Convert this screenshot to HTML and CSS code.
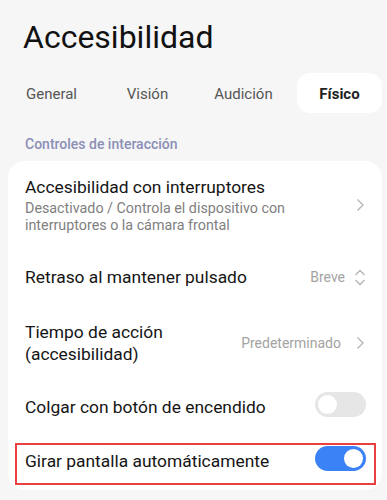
FILE: index.html
```html
<!DOCTYPE html>
<html>
  <head>
    <meta charset="utf-8" />
    <meta name="viewport" content="width=device-width, initial-scale=1" />
    <link rel="stylesheet" href="styles.css">
  </head>
  <body>
    <div class="page">
      <div class="page-title">Accesibilidad</div>

      <div class="tabs">
        <div class="tab">General</div>
        <div class="tab">Visión</div>
        <div class="tab">Audición</div>
        <div class="tab active">Físico</div>
      </div>

      <div class="section-title">Controles de interacción</div>

      <div class="card">
        <div class="row row-sub">
          <div class="row-text">
            <div class="row-title">Accesibilidad con interruptores</div>
            <div class="row-desc">Desactivado / Controla el dispositivo con interruptores o la cámara frontal</div>
          </div>
          <svg class="chevron" width="9" height="14" viewBox="0 0 9 14">
            <path d="M1.5 1.5 L7 7 L1.5 12.5" fill="none" stroke="#b4b4b4" stroke-width="1.3" />
          </svg>
        </div>

        <div class="row">
          <div class="row-text">
            <div class="row-title">Retraso al mantener pulsado</div>
          </div>
          <span class="row-value">Breve</span>
          <svg class="updown" width="12" height="17" viewBox="0 0 12 17">
            <path d="M1.5 6 L6 1.5 L10.5 6" fill="none" stroke="#b4b4b4" stroke-width="1.3" />
            <path d="M1.5 11 L6 15.5 L10.5 11" fill="none" stroke="#b4b4b4" stroke-width="1.3" />
          </svg>
        </div>

        <div class="row row-wrap">
          <div class="row-text">
            <div class="row-title">Tiempo de acción<br>(accesibilidad)</div>
          </div>
          <span class="row-value wide">Predeterminado</span>
          <svg class="chevron" width="9" height="14" viewBox="0 0 9 14">
            <path d="M1.5 1.5 L7 7 L1.5 12.5" fill="none" stroke="#b4b4b4" stroke-width="1.3" />
          </svg>
        </div>

        <div class="row row-short">
          <div class="row-text">
            <div class="row-title">Colgar con botón de encendido</div>
          </div>
          <div class="switch"><div class="knob"></div></div>
        </div>

        <div class="row marked">
          <div class="row-text">
            <div class="row-title">Girar pantalla automáticamente</div>
          </div>
          <div class="switch on"><div class="knob"></div></div>
        </div>
      </div>
    </div>
  </body>
</html>
```

FILE: styles.css
```css
html,
body,
div {
  margin: 0;
  padding: 0;
  box-sizing: border-box;
}

body {
  background-color: #f6f6f6;
  font-family: Roboto, "Noto Sans", sans-serif;
  color: #111;
}

.page {
  width: 387px;
  height: 500px;
  overflow: hidden;
}

.page-title {
  margin: 17px 0 16px 23px;
  font-size: 32px;
  line-height: 40px;
  color: #111;
}

.tabs {
  display: grid;
  grid-template-columns: repeat(4, 96px);
  padding: 0 0 0 3px;
}
.tabs .tab {
  display: flex;
  align-items: center;
  justify-content: center;
  height: 40px;
  padding-top: 2px;
  margin: 0 5px 0 6px;
  border-radius: 13px;
  font-size: 15px;
  color: #555;
}
.tabs .tab.active {
  background-color: #fff;
  color: #222;
  font-weight: bold;
}

.section-title {
  margin: 21px 0 7px 25px;
  font-size: 14px;
  line-height: 20px;
  font-weight: 500;
  color: #8b8fb6;
}

.card {
  margin: 0 5px 0 8px;
  height: 329px;
  background-color: #fff;
  border-radius: 17px;
  overflow: hidden;
}

.row {
  display: flex;
  align-items: center;
  min-height: 56px;
  padding: 0 16px 0 17px;
  position: relative;
}
.row-sub {
  min-height: 88px;
}
.row-wrap {
  min-height: 76px;
}
.row-short {
  min-height: 52px;
}

.row-text {
  flex: 1;
}
.row-title {
  font-size: 17.4px;
  line-height: 22px;
  color: #151515;
}
.row-desc {
  margin-top: 2px;
  width: 275px;
  font-size: 14.3px;
  line-height: 17px;
  color: #808080;
}

.row-value {
  font-size: 14px;
  color: #a3a3a3;
  margin-right: 9px;
}
.row-value.wide {
  margin-right: 15px;
}

.chevron {
  display: block;
  margin-right: 1px;
}
.updown {
  display: block;
}

.switch {
  width: 51px;
  height: 25px;
  border-radius: 13px;
  background-color: #e6e6e6;
  padding: 3px;
  margin-bottom: 5px;
}
.switch .knob {
  width: 19px;
  height: 19px;
  border-radius: 50%;
  background-color: #fff;
}
.switch.on {
  background-color: #3b82f6;
}
.switch.on .knob {
  margin-left: 26px;
}

.row.marked::after {
  content: "";
  position: absolute;
  top: 10px;
  bottom: 4px;
  left: 7px;
  right: 6px;
  border: 2px solid #ec3f3f;
}
```
